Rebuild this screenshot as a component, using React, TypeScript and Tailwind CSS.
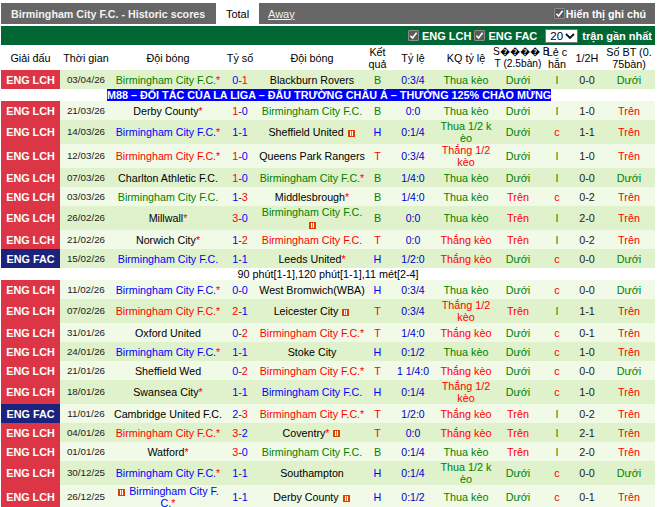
const BH = "Birmingham City F.C.";

type Tone = "g" | "b" | "r" | "k";

interface Match {
  league?: "FAC";
  date: string;
  home: string;
  homeTone: Tone;
  homeStar?: boolean;
  homeIcon?: boolean;
  score: [string, string];
  away: string;
  awayTone: Tone;
  awayStar?: boolean;
  awayIcon?: boolean;
  result: "B" | "H" | "T";
  odds: string;
  oddsResult: string;
  ou: "D" | "T";
  oe: "l" | "c";
  half: string;
  bt: "D" | "T";
  tall?: boolean;
  before?: "promo" | "note";
}

const matches: Match[] = [
  { date: "03/04/26", home: BH, homeTone: "g", homeStar: true, score: ["0", "1"], away: "Blackburn Rovers", awayTone: "k", result: "B", odds: "0:3/4", oddsResult: "Thua kèo", ou: "D", oe: "l", half: "0-0", bt: "D" },
  { before: "promo", date: "21/03/26", home: "Derby County", homeTone: "k", homeStar: true, score: ["1", "0"], away: BH, awayTone: "g", result: "B", odds: "0:0", oddsResult: "Thua kèo", ou: "D", oe: "l", half: "1-0", bt: "T" },
  { date: "14/03/26", home: BH, homeTone: "b", homeStar: true, score: ["1", "1"], away: "Sheffield United", awayTone: "k", awayIcon: true, result: "H", odds: "0:1/4", oddsResult: "Thua 1/2 kèo", ou: "D", oe: "c", half: "1-1", bt: "T", tall: true },
  { date: "12/03/26", home: BH, homeTone: "r", homeStar: true, score: ["1", "0"], away: "Queens Park Rangers", awayTone: "k", result: "T", odds: "0:3/4", oddsResult: "Thắng 1/2 kèo", ou: "D", oe: "l", half: "1-0", bt: "T", tall: true },
  { date: "07/03/26", home: "Charlton Athletic F.C.", homeTone: "k", score: ["1", "0"], away: BH, awayTone: "g", awayStar: true, result: "B", odds: "1/4:0", oddsResult: "Thua kèo", ou: "D", oe: "l", half: "0-0", bt: "D" },
  { date: "03/03/26", home: BH, homeTone: "g", score: ["1", "3"], away: "Middlesbrough", awayTone: "k", awayStar: true, result: "B", odds: "1/4:0", oddsResult: "Thua kèo", ou: "T", oe: "c", half: "0-2", bt: "T" },
  { date: "26/02/26", home: "Millwall", homeTone: "k", homeStar: true, score: ["3", "0"], away: BH, awayTone: "g", awayIcon: true, result: "B", odds: "0:0", oddsResult: "Thua kèo", ou: "T", oe: "l", half: "2-0", bt: "T", tall: true },
  { date: "21/02/26", home: "Norwich City", homeTone: "k", homeStar: true, score: ["1", "2"], away: BH, awayTone: "r", result: "T", odds: "0:0", oddsResult: "Thắng kèo", ou: "T", oe: "l", half: "0-2", bt: "T" },
  { league: "FAC", date: "15/02/26", home: BH, homeTone: "b", score: ["1", "1"], away: "Leeds United", awayTone: "k", awayStar: true, result: "H", odds: "1/2:0", oddsResult: "Thắng kèo", ou: "D", oe: "c", half: "0-0", bt: "D" },
  { before: "note", date: "11/02/26", home: BH, homeTone: "b", homeStar: true, score: ["0", "0"], away: "West Bromwich(WBA)", awayTone: "k", result: "H", odds: "0:3/4", oddsResult: "Thua kèo", ou: "D", oe: "c", half: "0-0", bt: "D" },
  { date: "07/02/26", home: BH, homeTone: "r", homeStar: true, score: ["2", "1"], away: "Leicester City", awayTone: "k", awayIcon: true, result: "T", odds: "0:3/4", oddsResult: "Thắng 1/2 kèo", ou: "T", oe: "l", half: "1-1", bt: "T", tall: true },
  { date: "31/01/26", home: "Oxford United", homeTone: "k", score: ["0", "2"], away: BH, awayTone: "r", awayStar: true, result: "T", odds: "1/4:0", oddsResult: "Thắng kèo", ou: "D", oe: "c", half: "0-1", bt: "T" },
  { date: "24/01/26", home: BH, homeTone: "b", homeStar: true, score: ["1", "1"], away: "Stoke City", awayTone: "k", result: "H", odds: "0:1/2", oddsResult: "Thua kèo", ou: "D", oe: "c", half: "1-0", bt: "T" },
  { date: "21/01/26", home: "Sheffield Wed", homeTone: "k", score: ["0", "2"], away: BH, awayTone: "r", awayStar: true, result: "T", odds: "1 1/4:0", oddsResult: "Thắng kèo", ou: "D", oe: "c", half: "0-0", bt: "D" },
  { date: "18/01/26", home: "Swansea City", homeTone: "k", homeStar: true, score: ["1", "1"], away: BH, awayTone: "b", result: "H", odds: "0:1/4", oddsResult: "Thắng 1/2 kèo", ou: "D", oe: "c", half: "1-0", bt: "T", tall: true },
  { league: "FAC", date: "11/01/26", home: "Cambridge United F.C.", homeTone: "k", score: ["2", "3"], away: BH, awayTone: "r", awayStar: true, result: "T", odds: "1/2:0", oddsResult: "Thắng kèo", ou: "T", oe: "l", half: "0-2", bt: "T" },
  { date: "04/01/26", home: BH, homeTone: "r", homeStar: true, score: ["3", "2"], away: "Coventry", awayTone: "k", awayStar: true, awayIcon: true, result: "T", odds: "0:0", oddsResult: "Thắng kèo", ou: "T", oe: "l", half: "2-1", bt: "T" },
  { date: "01/01/26", home: "Watford", homeTone: "k", homeStar: true, score: ["3", "0"], away: BH, awayTone: "g", result: "B", odds: "0:1/4", oddsResult: "Thua kèo", ou: "T", oe: "l", half: "2-0", bt: "T" },
  { date: "30/12/25", home: BH, homeTone: "b", homeStar: true, score: ["1", "1"], away: "Southampton", awayTone: "k", result: "H", odds: "0:1/4", oddsResult: "Thua 1/2 kèo", ou: "D", oe: "c", half: "0-0", bt: "D", tall: true },
  { date: "26/12/25", home: BH, homeTone: "b", homeStar: true, homeIcon: true, score: ["1", "1"], away: "Derby County", awayTone: "k", awayIcon: true, result: "H", odds: "0:1/2", oddsResult: "Thua kèo", ou: "D", oe: "c", half: "0-1", bt: "T", tall: true },
];

const toneClass: Record<Tone, string> = {
  g: "text-[#008000]",
  b: "text-[#0000ff]",
  r: "text-[#ff0000]",
  k: "text-black",
};

const resultClass = { B: "text-[#008000]", H: "text-[#0000ff]", T: "text-[#ff0000]" };

function FlameIcon() {
  return (
    <svg viewBox="0 0 7 7" className="mx-px inline-block h-[7px] w-[7px] align-[-0.5px]">
      <rect width="7" height="7" fill="#e63c00" />
      <rect x="2" y="1" width="1" height="5" fill="#fff" />
      <rect x="3" y="1" width="1" height="5" fill="#f0703a" />
      <rect x="4" y="1" width="1" height="5" fill="#fff" />
    </svg>
  );
}

function Check() {
  return (
    <span className="inline-flex h-[11px] w-[11px] shrink-0 items-center justify-center rounded-[1px] border border-[#8a8a8a] bg-[#5a5a5a]">
      <svg viewBox="0 0 9 9" className="h-[9px] w-[9px]">
        <path d="M1.4 4.8 L3.6 7 L7.6 1.8" fill="none" stroke="#fff" strokeWidth="1.6" />
      </svg>
    </span>
  );
}

function Team({ name, tone, star, icon, iconFirst }: { name: string; tone: Tone; star?: boolean; icon?: boolean; iconFirst?: boolean }) {
  return (
    <td className={`break-all text-center text-[10.7px] ${toneClass[tone]}`}>
      {icon && iconFirst && <><FlameIcon />{" "}</>}
      {name}
      {star && <span className="text-[#ff0000]">*</span>}
      {icon && !iconFirst && <>{" "}<FlameIcon /></>}
    </td>
  );
}

function Score({ score }: { score: [string, string] }) {
  const [a, b] = score;
  const aWin = Number(a) > Number(b);
  const bWin = Number(b) > Number(a);
  return (
    <td className="text-center text-[10.8px]">
      <span className={aWin ? "text-[#ff0000]" : "text-[#0000ff]"}>{a}</span>
      <span className="text-[#333333]">-</span>
      <span className={bWin ? "text-[#ff0000]" : "text-[#0000ff]"}>{b}</span>
    </td>
  );
}

function OverUnder({ value }: { value: "D" | "T" }) {
  return value === "D" ? <td className="text-center text-[#008000]">Dưới</td> : <td className="text-center text-[#ff0000]">Trên</td>;
}

export default function App() {
  return (
    <div className="h-[507px] w-[657px] overflow-hidden bg-white pl-px pt-[3px] font-['Liberation_Sans',Arial,sans-serif] text-[10.8px] leading-[12px] text-black">
      {/* thanh tiêu đề */}
      <div className="flex h-[21px] w-[654px] items-center bg-[#666666] text-[10.7px] font-bold text-white">
        <div className="w-[215px] whitespace-nowrap pl-[10px] text-[#f2f2f2]">Birmingham City F.C. - Historic scores</div>
        <div className="flex h-[21px] w-[43px] items-center justify-center bg-white text-[11px] font-normal text-black">Total</div>
        <div className="ml-[9px] text-[11px] font-normal text-[#f2f2f2] underline">Away</div>
        <div className="ml-auto mr-[9px] flex items-center gap-[1px]">
          <Check />
          <span>Hiển thị ghi chú</span>
        </div>
      </div>

      <div className="mt-[2px] flex h-[19px] w-[654px] items-center justify-end whitespace-nowrap bg-[#006633] pr-[3px] text-[11px] font-bold text-white">
        <Check />
        <span className="ml-[3px]">ENG LCH</span>
        <span className="ml-[3px] flex"><Check /></span>
        <span className="ml-[3px]">ENG FAC</span>
        <span className="ml-[8px] flex h-[14px] w-[33px] items-center justify-between border border-[#777777] bg-white pl-[4px] pr-[2px] text-[11.5px] font-normal text-black">
          20
          <svg viewBox="0 0 10 6" className="h-[6px] w-[10px]">
            <path d="M1 1 L5 5 L9 1" fill="none" stroke="#111" strokeWidth="1.8" />
          </svg>
        </span>
        <span className="ml-[4px]">trận gần nhất</span>
      </div>

      <table className="w-[654px] table-fixed border-collapse">
        <colgroup>
          <col className="w-[59px]" />
          <col className="w-[52px]" />
          <col className="w-[112px]" />
          <col className="w-[32px]" />
          <col className="w-[112px]" />
          <col className="w-[19px]" />
          <col className="w-[52px]" />
          <col className="w-[54px]" />
          <col className="w-[50px]" />
          <col className="w-[28px]" />
          <col className="w-[32px]" />
          <col className="w-[52px]" />
        </colgroup>
        <thead>
          <tr className="h-[25px] bg-white text-center">
            <td>Giải đấu</td>
            <td>Thời gian</td>
            <td>Đội bóng</td>
            <td>Tỷ số</td>
            <td>Đội bóng</td>
            <td>Kết<br />quả</td>
            <td>Tỷ lệ</td>
            <td>KQ tỷ lệ</td>
            <td className="whitespace-nowrap text-[10.2px]">S���� B<br />T (2.5bàn)</td>
            <td>Lẻ c<br />hẵn</td>
            <td>1/2H</td>
            <td className="whitespace-nowrap">Số BT (0.<br />75bàn)</td>
          </tr>
        </thead>
        <tbody>
          {matches.map((m, i) => (
            <Row key={m.date} m={m} dark={i % 2 === 0} />
          ))}
        </tbody>
      </table>
    </div>
  );
}

function Row({ m, dark }: { m: Match; dark: boolean }) {
  const height = m.tall ? "h-[24px]" : "h-[19px]";
  const bg = dark ? "bg-[#dff2cb]" : "bg-[#f0fae6]";
  return (
    <>
      {m.before === "promo" && (
        <tr className="h-[12px] bg-white">
          <td colSpan={12} className="text-center">
            <span className="relative left-[1px] inline-block bg-[#0000ff] font-bold text-white">M88 – ĐỐI TÁC CỦA LA LIGA – ĐẤU TRƯỜNG CHÂU Á – THƯỞNG 125% CHÀO MỪNG</span>
          </td>
        </tr>
      )}
      {m.before === "note" && (
        <tr className="h-[12px] bg-white">
          <td colSpan={12} className="text-center">90 phút[1-1],120 phút[1-1],11 mét[2-4]</td>
        </tr>
      )}
      <tr className={`${height} ${bg}`}>
        <td className={`text-center text-[10.8px] font-bold text-white ${m.league ? "bg-[#1a237e]" : "bg-[#dc3545]"}`}>
          ENG {m.league ?? "LCH"}
        </td>
        <td className="text-center text-[9.8px] text-[#222222]">{m.date}</td>
        <Team name={m.home} tone={m.homeTone} star={m.homeStar} icon={m.homeIcon} iconFirst={m.homeIcon} />
        <Score score={m.score} />
        <Team name={m.away} tone={m.awayTone} star={m.awayStar} icon={m.awayIcon} />
        <td className={`text-center ${resultClass[m.result]}`}>{m.result}</td>
        <td className="text-center text-[10.5px] text-[#0000cc]">{m.odds}</td>
        <td className={`break-all text-center ${m.oddsResult.startsWith("Thua") ? "text-[#008000]" : "text-[#ff0000]"}`}>{m.oddsResult}</td>
        <OverUnder value={m.ou} />
        <td className={`text-center ${m.oe === "c" ? "text-[#ff0000]" : "text-[#008000]"}`}>{m.oe}</td>
        <td className="text-center text-[#222222]">{m.half}</td>
        <OverUnder value={m.bt} />
      </tr>
    </>
  );
}
